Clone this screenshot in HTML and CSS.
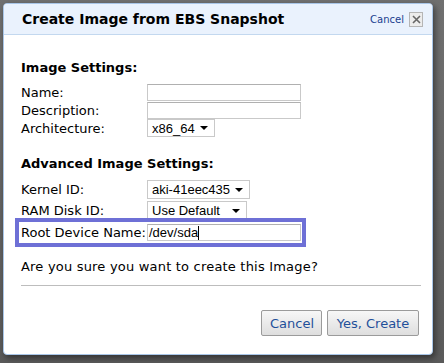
FILE: index.html
```html
<!DOCTYPE html>
<html lang="en">
<head>
    <meta charset="UTF-8">
    <title>Create Image from EBS Snapshot</title>
    <link rel="stylesheet" href="styles.css">
</head>
<body>
    <div class="dialog">
        <div class="dialog-header">
            <h1>Create Image from EBS Snapshot</h1>
            <div class="close-area">
                <a href="#" class="close-link">Cancel</a>
                <span class="close-box">
                    <svg width="9" height="9" viewBox="0 0 9 9"><path d="M1 1L8 8M8 1L1 8" stroke="#666" stroke-width="1.6"/></svg>
                </span>
            </div>
        </div>
        <div class="dialog-body">
            <h2>Image Settings:</h2>
            <div class="form-row">
                <label>Name:</label>
                <div class="text-input"></div>
            </div>
            <div class="form-row">
                <label>Description:</label>
                <div class="text-input"></div>
            </div>
            <div class="form-row">
                <label>Architecture:</label>
                <div class="select arch"><span>x86_64</span><span class="arrow"></span></div>
            </div>

            <h2 class="advanced">Advanced Image Settings:</h2>
            <div class="form-row tall">
                <label>Kernel ID:</label>
                <div class="select kernel"><span>aki-41eec435</span><span class="arrow"></span></div>
            </div>
            <div class="form-row tall">
                <label>RAM Disk ID:</label>
                <div class="select ramdisk"><span>Use Default</span><span class="arrow"></span></div>
            </div>
            <div class="form-row tall highlight">
                <label>Root Device Name:</label>
                <div class="text-input"><span>/dev/sda</span><span class="caret"></span></div>
            </div>

            <p class="confirm">Are you sure you want to create this Image?</p>
            <hr>
            <div class="buttons">
                <button class="btn cancel">Cancel</button>
                <button class="btn yes">Yes, Create</button>
            </div>
        </div>
    </div>
</body>
</html>
```

FILE: styles.css
```css
body {
    margin: 0;
    padding: 3px;
    background: linear-gradient(to bottom, #707070, #5a5a5a);
    font-family: "DejaVu Sans", Verdana, sans-serif;
    font-size: 12px;
    color: #000;
    height: 363px;
    box-sizing: border-box;
    overflow: hidden;
}
.dialog {
    width: 430px;
    height: 352px;
    box-sizing: border-box;
    background: #fff;
    border: 1px solid #a9c6e8;
    border-radius: 4px;
    box-shadow: 2px 3px 6px rgba(0, 0, 0, 0.45);
    overflow: hidden;
}
.dialog-header {
    height: 30px;
    background: #eaf2fd;
    border-bottom: 1px solid #c3d8ef;
    display: flex;
    align-items: center;
    justify-content: space-between;
    padding: 0 9px 0 18px;
}
h1 {
    margin: 0;
    font-size: 14px;
    font-weight: bold;
}
.close-area {
    display: flex;
    align-items: center;
    gap: 5px;
}
.close-link {
    font-size: 10px;
    color: #1b3f8f;
    text-decoration: none;
}
.close-box {
    width: 12px;
    height: 13px;
    border: 1px solid #b5b5b5;
    background: #ececec;
    display: flex;
    align-items: center;
    justify-content: center;
}
.dialog-body {
    padding: 25px 11px 0 17px;
}
h2 {
    margin: 0 0 8px;
    font-size: 13px;
    line-height: 15px;
    font-weight: bold;
}
h2.advanced {
    margin-top: 19px;
    margin-bottom: 8px;
}
.form-row {
    display: flex;
    align-items: center;
    height: 18px;
}
.form-row.tall {
    height: 21px;
}
.form-row label {
    width: 126px;
    font-size: 13px;
}
.text-input {
    width: 151px;
    height: 15px;
    border: 1px solid #c9c9c9;
    border-top-color: #b0b0b0;
    display: flex;
    align-items: center;
    font-family: "Liberation Sans", Arial, sans-serif;
    font-size: 13px;
    padding: 0 0 0 1px;
}
.caret {
    width: 1px;
    height: 14px;
    background: #000;
}
.select {
    height: 16px;
    border: 1px solid #c9c9c9;
    display: flex;
    align-items: center;
    justify-content: space-between;
    padding: 0 6px 0 4px;
    font-family: "Liberation Sans", Arial, sans-serif;
    font-size: 13px;
}
.tall .select {
    height: 17px;
}
.select.arch { width: 56px; }
.select.kernel { width: 91px; }
.select.ramdisk { width: 88px; }
.arrow {
    width: 0;
    height: 0;
    border-left: 4px solid transparent;
    border-right: 4px solid transparent;
    border-top: 4px solid #000;
}
.highlight {
    margin: 1px 0 0 -2px;
    padding-left: 2px;
    width: 281px;
    outline: 4px solid #6e70d6;
}
.confirm {
    margin: 16px 0 0;
    font-size: 13px;
    line-height: 15px;
    letter-spacing: 0.2px;
}
hr {
    margin: 11px 0 0;
    border: none;
    border-top: 1px solid #bdbdbd;
    width: 400px;
}
.buttons {
    display: flex;
    justify-content: flex-end;
    gap: 5px;
    margin-top: 24px;
    padding-right: 2px;
}
.btn {
    height: 26px;
    font-family: "DejaVu Sans", Verdana, sans-serif;
    font-size: 13px;
    color: #1f4f9a;
    background: linear-gradient(to bottom, #f7f7f7, #dedede);
    border: 1px solid #9b9b9b;
    border-radius: 2px;
    padding: 0 8px;
}
.btn.cancel { width: 61px; }
.btn.yes { width: 92px; }
```
